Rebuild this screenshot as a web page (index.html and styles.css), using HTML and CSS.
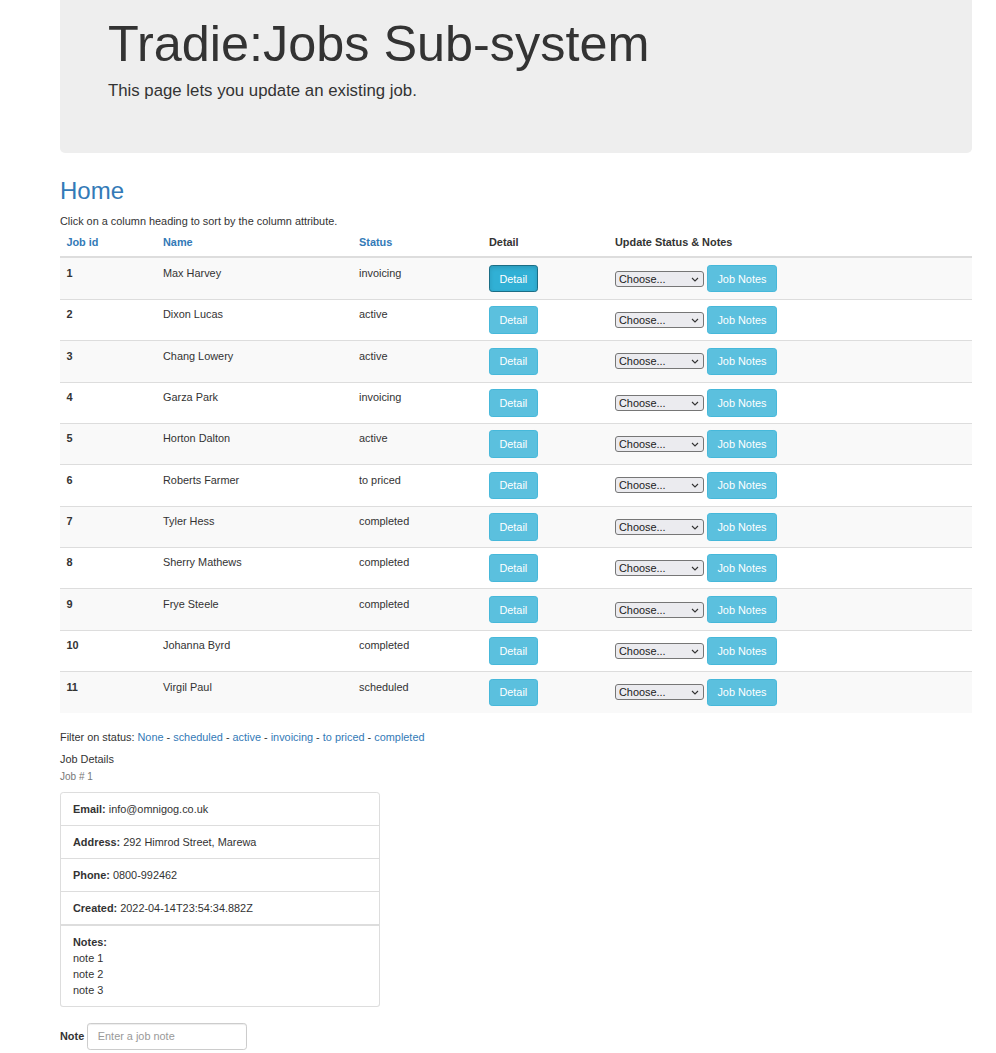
FILE: index.html
```html
<!DOCTYPE html>
<html lang="en">
<head>
<meta charset="utf-8">
<title>Tradie:Jobs Sub-system</title>
<link rel="stylesheet" href="styles.css">
</head>
<body>
<div class="container">
  <div class="jumbotron">
    <h1>Tradie:Jobs Sub-system</h1>
    <p>This page lets you update an existing job.</p>
  </div>

  <h2 class="home">Home</h2>
  <p class="hint">Click on a column heading to sort by the column attribute.</p>

  <table class="jobs">
    <colgroup>
      <col class="c-id"><col class="c-name"><col class="c-status"><col class="c-detail"><col>
    </colgroup>
    <thead>
      <tr>
        <th><a href="#">Job id</a></th>
        <th><a href="#">Name</a></th>
        <th><a href="#">Status</a></th>
        <th>Detail</th>
        <th>Update Status &amp; Notes</th>
      </tr>
    </thead>
    <tbody>
      <tr><td class="id">1</td><td>Max Harvey</td><td>invoicing</td><td><button class="btn active">Detail</button></td><td><span class="sel"><select><option>Choose...</option></select><svg class="chev" viewBox="0 0 8 5" width="8" height="5"><path d="M1 1l3 3 3-3" fill="none" stroke="#333" stroke-width="1.1"/></svg></span> <button class="btn">Job Notes</button></td></tr>
      <tr><td class="id">2</td><td>Dixon Lucas</td><td>active</td><td><button class="btn">Detail</button></td><td><span class="sel"><select><option>Choose...</option></select><svg class="chev" viewBox="0 0 8 5" width="8" height="5"><path d="M1 1l3 3 3-3" fill="none" stroke="#333" stroke-width="1.1"/></svg></span> <button class="btn">Job Notes</button></td></tr>
      <tr><td class="id">3</td><td>Chang Lowery</td><td>active</td><td><button class="btn">Detail</button></td><td><span class="sel"><select><option>Choose...</option></select><svg class="chev" viewBox="0 0 8 5" width="8" height="5"><path d="M1 1l3 3 3-3" fill="none" stroke="#333" stroke-width="1.1"/></svg></span> <button class="btn">Job Notes</button></td></tr>
      <tr><td class="id">4</td><td>Garza Park</td><td>invoicing</td><td><button class="btn">Detail</button></td><td><span class="sel"><select><option>Choose...</option></select><svg class="chev" viewBox="0 0 8 5" width="8" height="5"><path d="M1 1l3 3 3-3" fill="none" stroke="#333" stroke-width="1.1"/></svg></span> <button class="btn">Job Notes</button></td></tr>
      <tr><td class="id">5</td><td>Horton Dalton</td><td>active</td><td><button class="btn">Detail</button></td><td><span class="sel"><select><option>Choose...</option></select><svg class="chev" viewBox="0 0 8 5" width="8" height="5"><path d="M1 1l3 3 3-3" fill="none" stroke="#333" stroke-width="1.1"/></svg></span> <button class="btn">Job Notes</button></td></tr>
      <tr><td class="id">6</td><td>Roberts Farmer</td><td>to priced</td><td><button class="btn">Detail</button></td><td><span class="sel"><select><option>Choose...</option></select><svg class="chev" viewBox="0 0 8 5" width="8" height="5"><path d="M1 1l3 3 3-3" fill="none" stroke="#333" stroke-width="1.1"/></svg></span> <button class="btn">Job Notes</button></td></tr>
      <tr><td class="id">7</td><td>Tyler Hess</td><td>completed</td><td><button class="btn">Detail</button></td><td><span class="sel"><select><option>Choose...</option></select><svg class="chev" viewBox="0 0 8 5" width="8" height="5"><path d="M1 1l3 3 3-3" fill="none" stroke="#333" stroke-width="1.1"/></svg></span> <button class="btn">Job Notes</button></td></tr>
      <tr><td class="id">8</td><td>Sherry Mathews</td><td>completed</td><td><button class="btn">Detail</button></td><td><span class="sel"><select><option>Choose...</option></select><svg class="chev" viewBox="0 0 8 5" width="8" height="5"><path d="M1 1l3 3 3-3" fill="none" stroke="#333" stroke-width="1.1"/></svg></span> <button class="btn">Job Notes</button></td></tr>
      <tr><td class="id">9</td><td>Frye Steele</td><td>completed</td><td><button class="btn">Detail</button></td><td><span class="sel"><select><option>Choose...</option></select><svg class="chev" viewBox="0 0 8 5" width="8" height="5"><path d="M1 1l3 3 3-3" fill="none" stroke="#333" stroke-width="1.1"/></svg></span> <button class="btn">Job Notes</button></td></tr>
      <tr><td class="id">10</td><td>Johanna Byrd</td><td>completed</td><td><button class="btn">Detail</button></td><td><span class="sel"><select><option>Choose...</option></select><svg class="chev" viewBox="0 0 8 5" width="8" height="5"><path d="M1 1l3 3 3-3" fill="none" stroke="#333" stroke-width="1.1"/></svg></span> <button class="btn">Job Notes</button></td></tr>
      <tr><td class="id">11</td><td>Virgil Paul</td><td>scheduled</td><td><button class="btn">Detail</button></td><td><span class="sel"><select><option>Choose...</option></select><svg class="chev" viewBox="0 0 8 5" width="8" height="5"><path d="M1 1l3 3 3-3" fill="none" stroke="#333" stroke-width="1.1"/></svg></span> <button class="btn">Job Notes</button></td></tr>
    </tbody>
  </table>

  <p class="filter">Filter on status: <a href="#">None</a> - <a href="#">scheduled</a> - <a href="#">active</a> - <a href="#">invoicing</a> - <a href="#">to priced</a> - <a href="#">completed</a></p>
  <div class="details-title">Job Details</div>
  <div class="job-no">Job # 1</div>

  <ul class="list-group">
    <li class="item"><b>Email:</b> info@omnigog.co.uk</li>
    <li class="item"><b>Address:</b> 292 Himrod Street, Marewa</li>
    <li class="item"><b>Phone:</b> 0800-992462</li>
    <li class="item"><b>Created:</b> 2022-04-14T23:54:34.882Z</li>
    <li class="item notes">
      <b>Notes:</b>
      <div>note 1</div>
      <div>note 2</div>
      <div>note 3</div>
    </li>
  </ul>

  <form class="note-form">
    <label for="note">Note</label>
    <input id="note" type="text" placeholder="Enter a job note">
  </form>
</div>
</body>
</html>
```

FILE: styles.css
```css
html, body {
  margin: 0;
  padding: 0;
  background: #fff;
}
body {
  font-family: "Liberation Sans", Arial, Helvetica, sans-serif;
  font-size: 10.9px;
  line-height: 16px;
  color: #333;
}
a {
  color: #337ab7;
  text-decoration: none;
}
.container {
  width: 912px;
  margin-left: 60px;
}
.jumbotron {
  background: #eee;
  border-radius: 0 0 5px 5px;
  padding: 16px 48px 50px;
}
.jumbotron h1 {
  margin: 0 0 8px;
  font-size: 50.4px;
  line-height: 55px;
  font-weight: 400;
  color: #333;
}
.jumbotron p {
  margin: 0;
  font-size: 16.8px;
  line-height: 24px;
}
.home {
  margin: 25px 0 9px 0;
  font-size: 24px;
  line-height: 26.4px;
  font-weight: 500;
  color: #337ab7;
}
.hint {
  margin: 0;
}
.jobs {
  width: 100%;
  border-collapse: collapse;
  table-layout: fixed;
  margin-bottom: 16px;
}
.c-id { width: 96.6px; }
.c-name { width: 196px; }
.c-status { width: 130px; }
.c-detail { width: 126px; }
.jobs th {
  text-align: left;
  font-weight: 700;
  padding: 5px 6.4px 6px;
  border-bottom: 2px solid #ddd;
  vertical-align: bottom;
}
.jobs td {
  padding: 6.4px;
  border-top: 1px solid #ddd;
  vertical-align: top;
  white-space: nowrap;
}
.jobs tbody tr:nth-child(odd) {
  background: #f9f9f9;
}
.jobs td.id {
  font-weight: 700;
}
.btn {
  display: inline-block;
  font-family: inherit;
  font-size: 10.9px;
  line-height: 16px;
  padding: 4.8px 9.4px;
  color: #fff;
  background: #5bc0de;
  border: 1px solid #46b8da;
  border-radius: 3.2px;
  margin: 0;
  vertical-align: middle;
  cursor: pointer;
}
.btn.active {
  background: #31b0d5;
  border-color: #1b6d85;
  box-shadow: inset 0 2px 4px rgba(0, 0, 0, 0.125);
}
.sel {
  position: relative;
  display: inline-block;
  vertical-align: middle;
}
.sel select {
  -webkit-appearance: none;
  appearance: none;
  display: block;
  box-sizing: border-box;
  font-family: inherit;
  font-size: 10.9px;
  line-height: 14px;
  width: 89px;
  height: 16px;
  margin: 0;
  padding: 0 14px 0 3px;
  color: #222;
  background: #ebebef;
  border: 1px solid #767676;
  border-radius: 3px;
}
.sel .chev {
  position: absolute;
  right: 5px;
  top: 6px;
  pointer-events: none;
}
.filter {
  margin: 0 0 6.4px;
}
.details-title {
  margin: 0;
}
.job-no {
  font-size: 10px;
  color: #777;
  margin-top: 2px;
  margin-bottom: 7px;
}
.list-group {
  list-style: none;
  margin: 0 0 16px;
  padding: 0;
  width: 320px;
}
.item {
  border: 1px solid #ddd;
  padding: 8px 12px;
  margin-bottom: -1px;
  background: #fff;
}
.item:first-child {
  border-radius: 3.2px 3.2px 0 0;
}
.item.notes {
  border-top: 2px solid #ddd;
  margin-bottom: 0;
  border-radius: 0 0 3.2px 3.2px;
}
.note-form {
  display: flex;
  align-items: center;
  gap: 3px;
}
.note-form label {
  font-weight: 700;
}
.note-form input {
  width: 160px;
  height: 27px;
  box-sizing: border-box;
  padding: 4.8px 9.6px;
  border: 1px solid #ccc;
  border-radius: 3.2px;
  font-family: inherit;
  font-size: 10.9px;
  color: #555;
  box-shadow: inset 0 1px 1px rgba(0, 0, 0, 0.075);
}
.note-form input::placeholder {
  color: #999;
}
```
